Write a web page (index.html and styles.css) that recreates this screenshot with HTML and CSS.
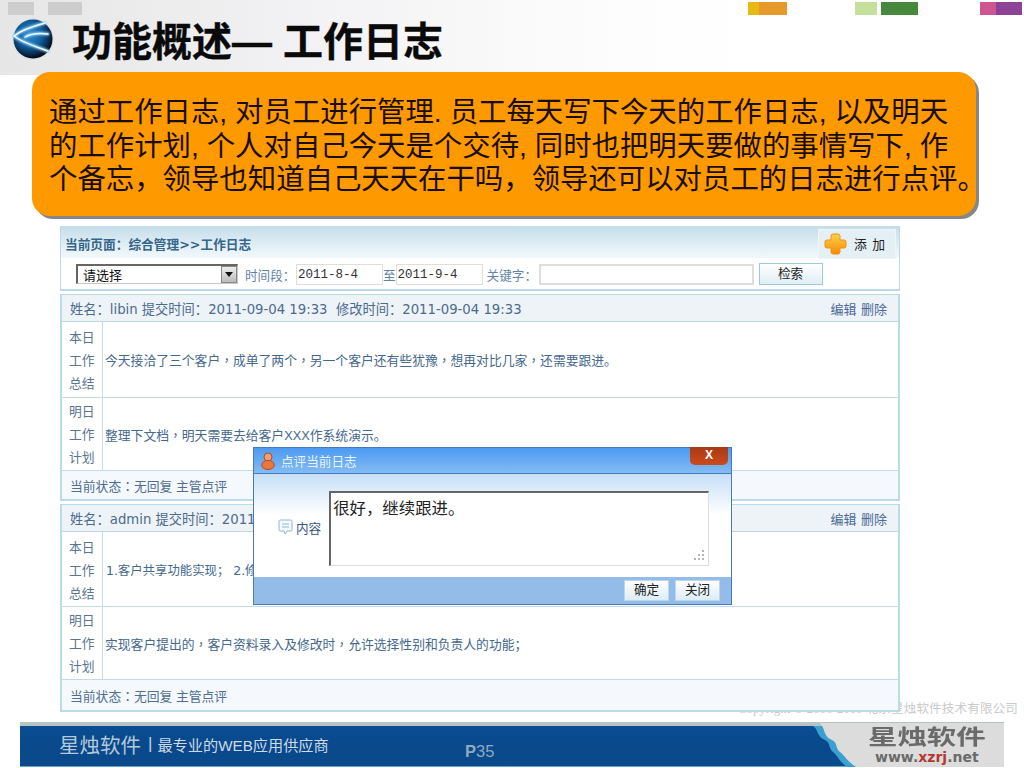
FILE: index.html
```html
<!DOCTYPE html>
<html lang="zh-CN">
<head>
<meta charset="utf-8">
<title>功能概述— 工作日志</title>
<link rel="stylesheet" href="styles.css">
</head>
<body>
<div class="slide">
  <header class="head">
    <div class="chips">
      <div class="chip-group chip-group-left"><i class="chip c-grey1"></i><i class="chip c-grey2"></i></div>
      <div class="chip-group chip-group-right">
        <span class="chip-set set-orange"><i class="chip c-yellow"></i><i class="chip c-orange"></i></span>
        <span class="chip-set set-green"><i class="chip c-lgreen"></i><i class="chip c-dgreen"></i></span>
        <span class="chip-set set-purple"><i class="chip c-pink"></i><i class="chip c-purple"></i></span>
      </div>
    </div>
    <div class="title-row">
      <svg class="globe" width="42" height="42" viewBox="0 0 42 42">
        <defs>
          <radialGradient id="gb" cx="42%" cy="38%" r="62%">
            <stop offset="0" stop-color="#2f8fd4"/>
            <stop offset=".5" stop-color="#135f9f"/>
            <stop offset=".8" stop-color="#0b2f55"/>
            <stop offset="1" stop-color="#030a12"/>
          </radialGradient>
          <filter id="glow" x="-20%" y="-20%" width="140%" height="140%"><feGaussianBlur stdDeviation=".9"/></filter>
        </defs>
        <circle cx="21" cy="21" r="20.500" fill="#d5dde4"/>
        <circle cx="21" cy="21" r="19.500" fill="url(#gb)"/>
        <g fill="none" stroke-linecap="round">
          <path d="M33 5C22 8 9 12 2 18c7 6 20 10 34 15M13 19c7-4 15-4 23-3" stroke="#8fd0fa" stroke-width="3" filter="url(#glow)"/>
          <path d="M33 5C22 8 9 12 2 18c7 6 20 10 34 15M13 19c7-4 15-4 23-3" stroke="#f2faff" stroke-width="1.400"/>
        </g>
      </svg>
      <h1 class="title">功能概述— 工作日志</h1>
    </div>
  </header>

  <section class="callout">
    <p class="callout-line">通过工作日志, 对员工进行管理. 员工每天写下今天的工作日志, 以及明天</p>
    <p class="callout-line">的工作计划, 个人对自己今天是个交待, 同时也把明天要做的事情写下, 作</p>
    <p class="callout-line">个备忘，领导也知道自己天天在干吗，领导还可以对员工的日志进行点评。</p>
  </section>

  <div class="watermark">Copyright © 2006-2011 北京星烛软件技术有限公司</div>

  <main class="app">
    <div class="toolbar">
      <div class="crumb-row">
        <span class="crumb">当前页面<span class="tc">：</span>综合管理<span class="gt">&gt;&gt;</span>工作日志</span>
        <span class="add-btn">
          <svg width="23" height="22" viewBox="0 0 23 22">
            <defs><linearGradient id="pl" x1="0" y1="0" x2="0" y2="1"><stop offset="0" stop-color="#ffd24a"/><stop offset="1" stop-color="#f58a08"/></linearGradient></defs>
            <path d="M9 1h5a2 2 0 0 1 2 2v4h4a2 2 0 0 1 2 2v4a2 2 0 0 1-2 2h-4v4a2 2 0 0 1-2 2H9a2 2 0 0 1-2-2v-4H3a2 2 0 0 1-2-2V9a2 2 0 0 1 2-2h4V3a2 2 0 0 1 2-2z" fill="url(#pl)" stroke="#ee9410"/>
          </svg>
          <span class="add-text">添 加</span>
        </span>
      </div>
      <div class="filter-row">
        <span class="select"><span class="select-text">请选择</span><span class="select-arrow"></span></span>
        <span class="flabel flabel-time">时间段<span class="tc">：</span></span>
        <span class="input input-date">2011-8-4</span>
        <span class="flabel">至</span>
        <span class="input input-date">2011-9-4</span>
        <span class="flabel flabel-key">关键字<span class="tc">：</span></span>
        <span class="input input-key"></span>
        <span class="search-btn">检索</span>
      </div>
    </div>

    <article class="log log-first">
      <div class="log-head"><span>姓名<span class="tc">：</span>libin 提交时间<span class="tc">：</span>2011-09-04 19:33&nbsp; 修改时间<span class="tc">：</span>2011-09-04 19:33</span><span class="log-actions">编辑 删除</span></div>
      <div class="log-row row-76">
        <div class="log-label">本日<br>工作<br>总结</div>
        <div class="log-text">今天接洽了三个客户<span class="tc">，</span>成单了两个<span class="tc">，</span>另一个客户还有些犹豫<span class="tc">，</span>想再对比几家<span class="tc">，</span>还需要跟进。</div>
      </div>
      <div class="log-row row-73">
        <div class="log-label">明日<br>工作<br>计划</div>
        <div class="log-text">整理下文档<span class="tc">，</span>明天需要去给客户XXX作系统演示。</div>
      </div>
      <div class="log-foot">当前状态<span class="tc">：</span>无回复 主管点评</div>
    </article>

    <article class="log log-second">
      <div class="log-head"><span>姓名<span class="tc">：</span>admin 提交时间<span class="tc">：</span>2011</span><span class="log-actions">编辑 删除</span></div>
      <div class="log-row row-75">
        <div class="log-label">本日<br>工作<br>总结</div>
        <div class="log-text log-text-num">1.客户共享功能实现； 2.修</div>
      </div>
      <div class="log-row row-73">
        <div class="log-label">明日<br>工作<br>计划</div>
        <div class="log-text">实现客户提出的<span class="tc">，</span>客户资料录入及修改时<span class="tc">，</span>允许选择性别和负责人的功能；</div>
      </div>
      <div class="log-foot">当前状态<span class="tc">：</span>无回复 主管点评</div>
    </article>

    <div class="dialog">
      <div class="dlg-title">
        <svg width="14" height="18" viewBox="0 0 14 18"><circle cx="7" cy="5" r="4" fill="#f0a070" stroke="#b84a20"/><ellipse cx="7" cy="13" rx="6.300" ry="4.600" fill="#e8763f" stroke="#b84a20"/></svg>
        <span>点评当前日志</span>
        <span class="dlg-close">X</span>
      </div>
      <div class="dlg-body">
        <div class="dlg-label">
          <svg width="15" height="17" viewBox="0 0 15 17"><path d="M2.500 1h10A1.500 1.500 0 0 1 14 2.500v8a1.500 1.500 0 0 1-1.500 1.500H9l-2 3-1-3H2.500A1.500 1.500 0 0 1 1 10.500v-8A1.500 1.500 0 0 1 2.500 1z" fill="#f4fafe" stroke="#8fb6d2"/><path d="M4 5h7M4 8h7" stroke="#8fb6d2"/></svg>
          <span>内容</span>
        </div>
        <div class="dlg-area"><span class="tc-area">很好<span class="tc">，</span>继续跟进。</span>
          <svg class="grip" width="13" height="13" viewBox="0 0 13 13"><path d="M10 1h2v2h-2zM6 5h2v2H6zM10 5h2v2h-2zM2 9h2v2H2zM6 9h2v2H6zM10 9h2v2h-2z" fill="#b5b5b5"/></svg>
        </div>
      </div>
      <div class="dlg-foot"><span class="dlg-btn">确定</span><span class="dlg-btn">关闭</span></div>
    </div>
  </main>

  <footer class="foot">
    <div class="foot-left">
      <span class="foot-brand">星烛软件</span>
      <span class="foot-sep">|</span>
      <span class="foot-slogan">最专业的WEB应用供应商</span>
    </div>
    <div class="foot-page"><b>P</b>35</div>
    <div class="foot-logo">
      <svg class="foot-curve" width="191" height="45" viewBox="0 0 191 45">
        <path d="M0 4C6 8 3 14 12 18c6 3 3 8 8 12 4 3 6 9 14 15H191V4z" fill="#3b9fd0"/>
        <path d="M7 1c6 7 3 13 12 17 6 3 3 8 8 12 4 3 7 9 16 15H191V1z" fill="#dcdcdc"/>
      </svg>
      <div class="logo-name">星烛软件</div>
      <div class="logo-url">www.<em>xzrj</em>.net</div>
    </div>
  </footer>
</div>
</body>
</html>
```
FILE: styles.css
```css
* { box-sizing: border-box; }
html, body { margin: 0; padding: 0; background: #fff; }
body { font-family: "Liberation Sans", "Noto Sans CJK SC", sans-serif; }
.slide { width: 1024px; height: 768px; overflow: hidden; position: relative; display: flex; flex-direction: column; background: #fff; }
.tc { font-family: "Noto Sans CJK TC", sans-serif; }

/* header */
.head { height: 75px; flex: none; margin-bottom: -3px; background: linear-gradient(90deg, #e6e6e6 0%, #f2f2f4 30%, #fdfdfd 60%, #fff 75%); display: flex; flex-direction: column; }
.chips { display: flex; justify-content: space-between; padding-top: 2px; height: 15px; }
.chip-group { display: flex; }
.chip { display: block; height: 13px; }
.chip-group-left { padding-left: 8px; gap: 14px; }
.c-grey1 { width: 26px; background: #cdcdcd; }
.c-grey2 { width: 34px; background: #cdcdcd; }
.chip-group-right { padding-right: 2px; }
.chip-set { display: flex; }
.set-orange { margin-right: 68px; }
.set-green { margin-right: 62px; gap: 4px; }
.c-yellow { width: 11px; background: #e8b814; }
.c-orange { width: 28px; background: #e69a2a; }
.c-lgreen { width: 22px; background: #c4e09a; }
.c-dgreen { width: 37px; background: #46893c; }
.c-pink { width: 16px; background: #cf5590; }
.c-purple { width: 26px; background: #8c4396; }
.title-row { display: flex; align-items: center; padding-left: 12px; margin-top: 3px; height: 42px; }
.globe { flex: none; }
.title { margin: 5px 0 0 18px; font-size: 40px; line-height: 42px; font-weight: 700; color: #0a0a0a; white-space: nowrap; -webkit-text-stroke: .4px #0a0a0a; }

/* callout */
.callout { flex: none; position: relative; margin-left: 32px; width: 944px; height: 144px; padding: 24px 0 0 17px; background: #ff9900; border-radius: 18px; box-shadow: 3px 3px 0 #85858a; color: #1a0e00; font-size: 28.400px; }
.callout-line { margin: 0; line-height: 33.500px; height: 33.500px; white-space: nowrap; }

/* watermark */
.watermark { position: absolute; right: 6px; top: 701px; font-family: "Liberation Serif", "Noto Sans CJK SC", serif; font-size: 12.500px; line-height: 16px; letter-spacing: .2px; color: #cacaca; white-space: nowrap; }

/* app */
.app { flex: none; position: relative; margin: 10px 0 0 60px; width: 840px; height: 486px; display: flex; flex-direction: column; gap: 3px; font-size: 12.800px; color: #4b6b8e; }
.toolbar { height: 65px; flex: none; border: 1px solid #b9dce8; border-width: 0 1px 2px; background: #fff; position: relative; }
.crumb-row { height: 32px; display: flex; justify-content: space-between; align-items: center; padding: 3px 3px 0 4px; background: linear-gradient(180deg, #c4dde9 0%, #e6f1f7 70%, #f1f8fb 100%); }
.crumb { font-weight: 700; color: #35658a; font-size: 12.700px; }
.gt { font-family: "DejaVu Sans", sans-serif; }
.add-btn { width: 78px; height: 30px; display: flex; align-items: center; gap: 7px; padding-left: 5px; background: #e4eff6; border: 1px solid #eef5f9; color: #222; font-size: 12.800px; }
.add-text { white-space: pre; word-spacing: 2px; }
.filter-row { height: 32px; display: flex; align-items: center; padding-left: 15px; white-space: nowrap; color: #6384a8; font-size: 12.600px; }
.select { width: 162px; height: 20px; border: 1px solid #c8c8c8; border-top: 2px solid #666; border-left: 2px solid #666; display: flex; justify-content: space-between; align-items: center; padding-left: 5px; color: #111; font-size: 13px; background: #fff; }
.select-arrow { width: 16px; height: 17px; background: linear-gradient(#eee, #bbb); border: 1px solid #888; position: relative; }
.select-arrow::after { content: ""; position: absolute; left: 3px; top: 5px; border: 4px solid transparent; border-top: 5px solid #111; border-bottom: 0; }
.flabel-time { margin-left: 7px; width: 51px; }
.flabel-key { margin-left: 4px; width: 52px; }
.input { height: 21px; border: 1px solid #dedede; background: #fff; display: block; }
.input-date { width: 87px; padding-left: 1px; font-family: "Liberation Mono", monospace; font-size: 12.500px; line-height: 21px; color: #333; }
.input-key { width: 215px; border-width: 2px; }
.search-btn { margin-left: 5px; width: 64px; height: 22px; border: 1px solid #9cc9dc; background: linear-gradient(180deg, #fff, #dfeef5); color: #222; text-align: center; line-height: 20px; font-size: 12.600px; }

.log { flex: none; border: 1px solid #b9dce8; border-width: 1px 2px 2px; background: #fff; display: flex; flex-direction: column; }
.log-first { height: 207px; }
.log-second { height: 208px; }
.log-head { height: 27px; flex: none; display: flex; justify-content: space-between; align-items: center; padding: 0 11px 0 8px; background: #eef3f8; border-bottom: 1px solid #bcd8e8; font-family: "DejaVu Sans", "Noto Sans CJK SC", sans-serif; font-size: 13.250px; white-space: nowrap; color: #4b6b8e; }
.log-actions { font-size: 13px; font-family: "Liberation Sans", "Noto Sans CJK SC", sans-serif; color: #4a6a98; word-spacing: 1px; }
.log-row { display: flex; flex: none; border-bottom: 1px solid #c5d9e8; }
.row-76 { height: 76px; }
.row-75 { height: 75px; }
.row-73 { height: 73px; }
.log-label { width: 41px; flex: none; padding: 4px 0 0 7px; line-height: 23px; border-right: 1px solid #c5dcea; color: #5a7590; }
.row-73 .log-label { padding-top: 2px; }
.log-text { padding: 0 0 0 2px; display: flex; align-items: center; color: #44688e; white-space: nowrap; }
.log-text-num { font-family: "DejaVu Sans", "Noto Sans CJK SC", sans-serif; font-size: 12.400px; padding: 1px 0 0 3px; }
.log-foot { flex: 1; display: flex; align-items: center; padding-left: 8px; background: #f5f8fc; color: #4f6f92; }

/* dialog */
.dialog { position: absolute; left: 193px; top: 221px; width: 479px; height: 158px; border: 1px solid #4a78b8; display: flex; flex-direction: column; background: #fff; }
.dlg-title { height: 26px; flex: none; display: flex; align-items: center; gap: 6px; padding-left: 7px; background: linear-gradient(180deg, #4b9af2, #84bbf2); border-bottom: 1px solid #3f7fc8; color: #e8f2ff; font-size: 12.600px; position: relative; }
.dlg-close { position: absolute; right: 3px; top: -1px; width: 38px; height: 18px; background: linear-gradient(#a83a14, #cc4a1c); border-radius: 0 0 5px 5px; color: #fff; font-weight: 700; font-size: 12px; text-align: center; line-height: 16px; }
.dlg-body { flex: 1; position: relative; display: flex; align-items: flex-start; padding: 17px 0 0 24px; background: linear-gradient(180deg, #c6dff7 0%, #fff 40%); }
.dlg-label { display: flex; align-items: center; gap: 3px; margin-top: 27px; color: #35567c; font-size: 12.600px; }
.dlg-area { position: relative; margin-left: 8px; width: 380px; height: 75px; padding: 3px 0 0 2px; background: #fff; border: 1px solid #ddd; border-top: 2px solid #666; border-left: 2px solid #666; color: #222; font-size: 16.400px; line-height: 22px; }
.grip { position: absolute; right: 3px; bottom: 3px; }
.dlg-foot { height: 27px; flex: none; display: flex; justify-content: flex-end; align-items: center; gap: 6px; padding-right: 11px; background: #94bce8; }
.dlg-btn { width: 45px; height: 21px; background: linear-gradient(180deg, #fff, #dcecf6); border: 1px solid #bcd6ec; color: #222; text-align: center; line-height: 19px; font-size: 12.600px; }

/* footer */
.foot { flex: none; margin: 10px 0 0 20px; width: 984px; height: 45px; border-top: 4px solid; border-image: linear-gradient(#b8c4c4, #6aa6c4) 1; border-bottom: 1px solid #5fb0c8; background: linear-gradient(180deg, #0a4d92, #09488a 60%, #0b4b8c); display: flex; align-items: center; position: relative; color: #c3d4e2; white-space: nowrap; }
.foot-left { display: flex; align-items: center; margin: 0 0 5px 39px; width: 406px; }
.foot-brand { font-size: 20.500px; color: #b3c9da; }
.foot-sep { margin: 0 5px 0 7px; font-size: 17px; }
.foot-slogan { font-size: 15.200px; color: #cddbe7; }
.foot-page { font-size: 16.500px; color: #8fa9c2; margin-top: 10px; }
.foot-logo { position: absolute; right: 0; top: -4px; width: 191px; height: 45px; }
.foot-curve { display: block; }
.logo-name { position: absolute; left: 55px; top: 2px; font-family: "Noto Sans CJK SC", sans-serif; font-weight: 700; font-size: 21px; line-height: 22px; color: #6a6a6a; transform: scaleX(1.4); transform-origin: left center; }
.logo-url { position: absolute; left: 62px; top: 26px; font-family: "DejaVu Sans", sans-serif; font-weight: 700; font-size: 14px; line-height: 18px; color: #6a6a6a; }
.logo-url em { font-style: normal; color: #b23a30; }
```
